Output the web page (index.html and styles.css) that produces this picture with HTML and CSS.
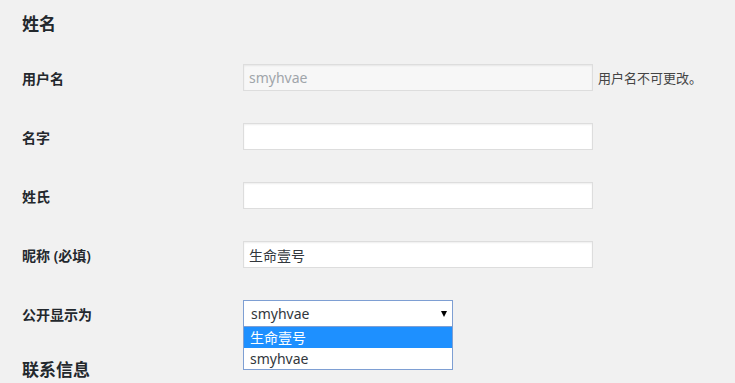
FILE: index.html
```html
<!DOCTYPE html>
<html lang="zh-CN">
<head>
  <meta charset="UTF-8" />
  <title>个人资料</title>
  <link rel="stylesheet" href="styles.css">
</head>
<body>

  <!-- 姓名 -->
  <h2 class="section-title">姓名</h2>

  <div class="form-table">
    <div class="form-row">
      <label class="form-label">用户名</label>
      <div class="form-field">
        <input type="text" class="text-input" value="smyhvae" disabled>
        <span class="hint">用户名不可更改。</span>
      </div>
    </div>

    <div class="form-row">
      <label class="form-label">名字</label>
      <div class="form-field">
        <input type="text" class="text-input">
      </div>
    </div>

    <div class="form-row">
      <label class="form-label">姓氏</label>
      <div class="form-field">
        <input type="text" class="text-input">
      </div>
    </div>

    <div class="form-row">
      <label class="form-label">昵称 (必填)</label>
      <div class="form-field">
        <input type="text" class="text-input" value="生命壹号">
      </div>
    </div>

    <div class="form-row">
      <label class="form-label">公开显示为</label>
      <div class="form-field">
        <div class="select-box">
          <div class="select-current">
            <span>smyhvae</span>
            <span class="select-arrow"></span>
          </div>
          <ul class="select-list">
            <li class="selected">生命壹号</li>
            <li>smyhvae</li>
          </ul>
        </div>
      </div>
    </div>
  </div>

  <!-- 联系信息 -->
  <h2 class="section-title contact-title">联系信息</h2>

</body>
</html>
```

FILE: styles.css
```css
body {
  margin: 0;
  padding: 0 22px;
  background: #f1f1f1;
  color: #23282d;
  font-family: "Segoe UI", "Noto Sans", "Noto Sans CJK SC", sans-serif;
  font-size: 13px;
  overflow: hidden;
}

.section-title {
  margin: 13px 0 0;
  font-size: 17px;
  line-height: 22px;
  font-weight: 600;
}

.contact-title {
  margin-top: 32px;
}

.form-table {
  display: flex;
  flex-direction: column;
  gap: 32px;
  margin-top: 29px;
}

.form-row {
  display: grid;
  grid-template-columns: 221px 1fr;
  align-items: center;
  height: 27px;
}

.form-label {
  font-size: 14px;
  font-weight: 600;
}

.form-field {
  display: flex;
  align-items: center;
  gap: 5px;
}

.text-input {
  box-sizing: border-box;
  width: 350px;
  height: 27px;
  margin: 0;
  padding: 0 5px;
  border: 1px solid #ddd;
  background: #fff;
  box-shadow: inset 0 1px 2px rgba(0,0,0,0.07);
  font-family: inherit;
  font-size: 14px;
  color: #32373c;
}

.text-input:disabled {
  background: #f7f7f7;
  color: #a0a5aa;
}

.hint {
  font-size: 13px;
  color: #444;
}

.select-box {
  position: relative;
  width: 210px;
}

.select-current {
  box-sizing: border-box;
  display: flex;
  justify-content: space-between;
  align-items: center;
  height: 27px;
  padding: 0 5px 0 7px;
  border: 1px solid #7e9fd3;
  background: #fff;
  font-size: 14px;
  color: #32373c;
}

.select-arrow {
  width: 0;
  height: 0;
  border-left: 3.5px solid transparent;
  border-right: 3.5px solid transparent;
  border-top: 6px solid #000;
  margin-top: 1px;
}

.select-list {
  position: absolute;
  top: 27px;
  left: 0;
  right: 0;
  box-sizing: border-box;
  margin: 0;
  padding: 0;
  list-style: none;
  border: 1px solid #7e9fd3;
  border-top: none;
  background: #fff;
  font-size: 14px;
  color: #32373c;
}

.select-list li {
  height: 21px;
  line-height: 21px;
  padding: 0 6px;
}

.select-list .selected {
  background: #1e90ff;
  color: #fff;
}
```
